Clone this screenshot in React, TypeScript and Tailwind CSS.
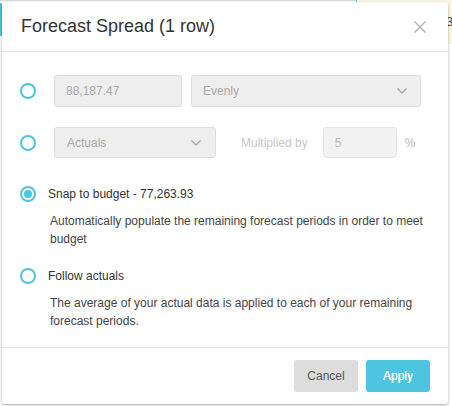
import React from 'react';

const font = { fontFamily: '"Liberation Sans", Arial, sans-serif' };

function Radio({ checked = false }: { checked?: boolean }) {
  return (
    <span className="flex h-4 w-4 flex-shrink-0 items-center justify-center rounded-full border-2 border-[#4ec5e0] bg-white">
      {checked && <span className="h-2 w-2 rounded-full bg-[#4ec5e0]" />}
    </span>
  );
}

function Chevron() {
  return (
    <svg width="12" height="8" viewBox="0 0 12 8" fill="none">
      <path d="M1.5 1.5 L6 6 L10.5 1.5" stroke="#a8a8a8" strokeWidth="1.4" />
    </svg>
  );
}

export default function App() {
  return (
    <div className="relative h-[406px] w-[452px] overflow-hidden bg-white" style={font}>
      {/* page behind the dialog */}
      <div className="absolute left-0 top-0 h-[1px] w-[356px] bg-[#dcdcdc]" />
      <div className="absolute left-0 top-[3px] h-[33px] w-[2px] bg-[#4ec5e0]" />
      <div className="absolute left-[356px] top-0 h-[44px] w-[96px] bg-[#fcf8e3]" />
      <div className="absolute left-[356px] top-0 h-[3px] w-[1px] bg-[#4ec5e0]" />
      <span className="absolute left-[446px] top-[12px] text-[13px] text-[#3b4a7a]">3</span>

      <div className="relative z-10 ml-[2px] mt-[2px] flex h-[402px] w-[446px] flex-col rounded-[3px] bg-white shadow-[0_1px_3px_rgba(0,0,0,0.35)]">
        {/* Header */}
        <div className="flex h-[50px] items-center justify-between border-b border-[#e5e5e5] pl-[19px] pr-[22px]">
          <h1 className="text-[18px] font-normal text-[#333]">Forecast Spread (1 row)</h1>
          <svg width="12" height="12" viewBox="0 0 12 12">
            <path d="M0.5 0.5 L11.5 11.5 M11.5 0.5 L0.5 11.5" stroke="#b3b3b3" strokeWidth="1.5" />
          </svg>
        </div>

        {/* Body */}
        <div className="flex-1 px-[18px] pt-[23px]">
          <div className="flex items-center">
            <Radio />
            <div className="ml-[18px] flex h-[32px] w-[128px] items-center rounded-[3px] border border-[#dddddd] bg-[#eeeeee] px-[11px] text-[12px] text-[#aaa]">
              88,187.47
            </div>
            <div className="ml-[9px] flex h-[32px] w-[230px] items-center justify-between rounded-[3px] border border-[#dddddd] bg-[#eeeeee] pl-[11px] pr-[12px] text-[12px] text-[#aaa]">
              <span>Evenly</span>
              <Chevron />
            </div>
          </div>

          <div className="mt-[20px] flex items-center">
            <Radio />
            <div className="ml-[18px] flex h-[31px] w-[162px] items-center justify-between rounded-[3px] border border-[#dddddd] bg-[#eeeeee] pl-[12px] pr-[13px] text-[12px] text-[#aaa]">
              <span>Actuals</span>
              <Chevron />
            </div>
            <span className="ml-[25px] text-[12px] text-[#c8c8c8]">Multiplied by</span>
            <div className="ml-[15px] flex h-[31px] w-[74px] items-center rounded-[3px] border border-[#e6e6e6] bg-[#f2f2f2] px-[11px] text-[12px] text-[#bbb]">
              5
            </div>
            <span className="ml-[8px] text-[12px] text-[#bbb]">%</span>
          </div>

          <div className="mt-[27px] flex items-center">
            <Radio checked />
            <span className="ml-[12px] text-[12px] leading-[18px] text-[#333]">Snap to budget - 77,263.93</span>
          </div>
          <p className="ml-[30px] mt-[9px] text-[12px] leading-[18px] text-[#444]">
            Automatically populate the remaining forecast periods in order to meet budget
          </p>

          <div className="mt-[19px] flex items-center">
            <Radio />
            <span className="ml-[12px] text-[12px] leading-[18px] text-[#333]">Follow actuals</span>
          </div>
          <p className="ml-[30px] mt-[9px] text-[12px] leading-[18px] text-[#444]">
            The average of your actual data is applied to each of your remaining forecast periods.
          </p>
        </div>

        {/* Footer */}
        <div className="flex justify-end gap-2 border-t border-[#e5e5e5] px-[18px] py-[12px]">
          <button className="h-[32px] w-[64px] rounded-[3px] bg-[#dddddd] text-[12px] text-[#555]">Cancel</button>
          <button className="h-[32px] w-[64px] rounded-[3px] bg-[#4ec5e0] text-[12px] text-white [text-shadow:0_0_0.4px_#fff]">Apply</button>
        </div>
      </div>
    </div>
  );
}
